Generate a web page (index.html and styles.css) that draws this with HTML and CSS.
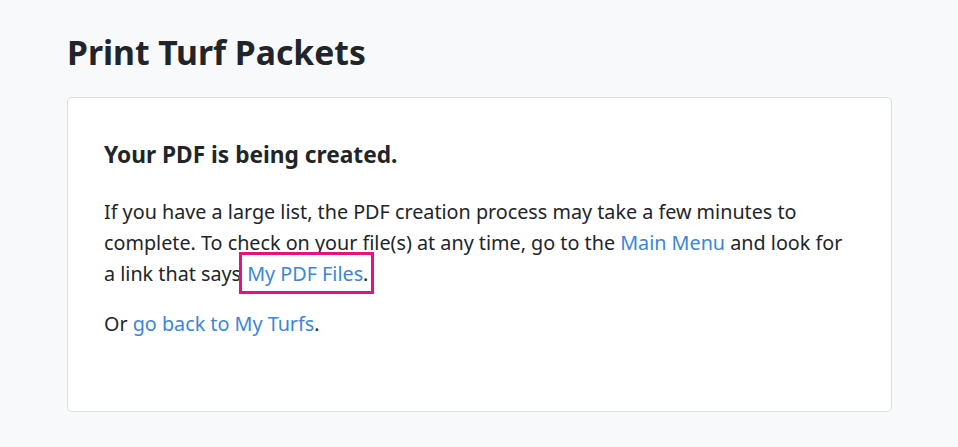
FILE: index.html
```html
<!DOCTYPE html>
<html lang="en">
<head>
<meta charset="utf-8">
<title>Print Turf Packets</title>
<link rel="stylesheet" href="styles.css">
</head>
<body>
<main class="page">
  <h1 class="title">Print Turf Packets</h1>
  <section class="card">
    <h2 class="card-heading">Your PDF is being created.</h2>
    <p class="text">If you have a large list, the PDF creation process may take a few minutes to complete. To check on your file(s) at any time, go to the <a class="link" href="#">Main Menu</a> and look for a link that says <span class="highlight"><a class="link" href="#">My PDF Files</a>.</span></p>
    <p class="text text-last">Or <a class="link" href="#">go back to My Turfs</a>.</p>
  </section>
</main>
</body>
</html>
```

FILE: styles.css
```css
html, body {
  margin: 0;
  padding: 0;
  background: #f8f9fa;
}
body {
  font-family: "Noto Sans", "Open Sans", sans-serif;
  color: #212529;
}
.page {
  padding: 28px 67px 0 67px;
}
.title {
  margin: 0 0 21px 0;
  font-size: 33.7px;
  font-weight: 700;
  line-height: 48px;
}
.card {
  background: #fff;
  border: 1px solid #dcdee0;
  border-radius: 5px;
  padding: 42px 36px 72px 36px;
  width: 751px;
}
.card-heading {
  margin: 0 0 26px 0;
  font-size: 22.7px;
  font-weight: 700;
  line-height: 30px;
}
.text {
  margin: 0 0 19px 0;
  font-size: 19.75px;
  line-height: 31px;
}
.text-last {
  margin-bottom: 0;
}
.link {
  color: #3b86d9;
  text-decoration: none;
}
.highlight {
  margin-left: -7px;
  padding: 5px 3px 4px 5px;
  border: 3px solid #e8127f;
}
```
